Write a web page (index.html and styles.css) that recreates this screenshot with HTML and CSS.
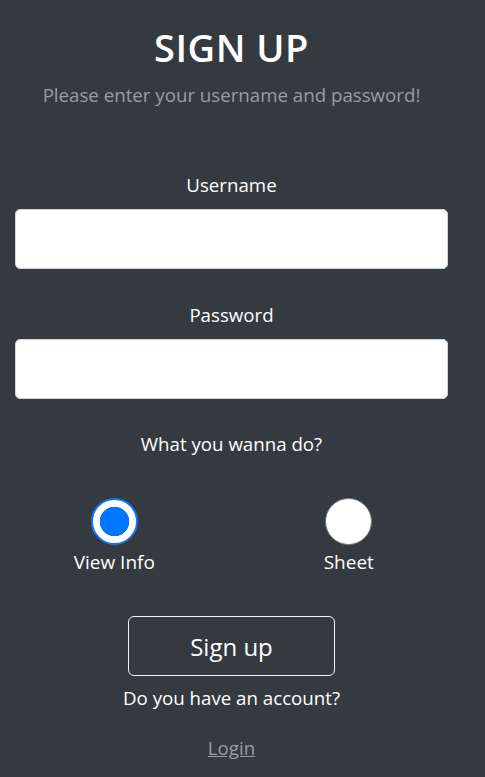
FILE: index.html
```html
<!DOCTYPE html>
<html>
<head>
<meta charset="utf-8">
<link rel="stylesheet" href="styles.css">
</head>
<body>
<main class="page">
  <h1 class="title">SIGN UP</h1>
  <p class="subtitle">Please enter your username and password!</p>
  <form class="form">
    <label class="label" for="u">Username</label>
    <input class="field" id="u" type="text">
    <label class="label pw" for="p">Password</label>
    <input class="field" id="p" type="password">
    <p class="question">What you wanna do?</p>
    <div class="choices">
      <label class="choice">
        <span class="radio checked"></span>
        <span class="choice-text">View Info</span>
      </label>
      <label class="choice">
        <span class="radio"></span>
        <span class="choice-text">Sheet</span>
      </label>
    </div>
    <button class="btn" type="button">Sign up</button>
    <p class="account">Do you have an account?</p>
    <a class="login" href="#">Login</a>
  </form>
</main>
</body>
</html>
```
FILE: styles.css
```css
html, body {
  margin: 0;
  padding: 0;
  background: #343a40;
  height: 100%;
}
body {
  font-family: "Open Sans", "Noto Sans", sans-serif;
  color: #fff;
}
.page {
  width: 433px;
  padding: 0 15px;
  display: flex;
  flex-direction: column;
  align-items: center;
}
.title {
  margin: 23px 0 0;
  font-size: 38px;
  font-weight: 600;
  line-height: 48px;
  letter-spacing: 0.5px;
}
.subtitle {
  margin: 10px 0 0;
  font-size: 18.7px;
  line-height: 27px;
  color: #9a9da1;
}
.form {
  width: 100%;
  display: flex;
  flex-direction: column;
  align-items: center;
  margin-top: 62.5px;
}
.label {
  font-size: 18.7px;
  line-height: 27px;
}
.label.pw {
  margin-top: 32px;
}
.field {
  box-sizing: border-box;
  width: 100%;
  height: 60px;
  margin-top: 11px;
  border: 1px solid #ced4da;
  border-radius: 5px;
  background: #fff;
}
.question {
  margin: 31px 0 0;
  font-size: 18.7px;
  line-height: 27px;
}
.choices {
  display: grid;
  grid-template-columns: 1fr 1fr;
  width: 463px;
  margin: 41px -15px 0;
}
.choice {
  display: flex;
  flex-direction: column;
  align-items: center;
}
.choice:first-child {
  margin-right: 3px;
}
.choice:last-child {
  margin-left: 3px;
}
.radio {
  box-sizing: border-box;
  width: 47px;
  height: 47px;
  border-radius: 50%;
  background: #fff;
  border: 1.5px solid #767676;
}
.radio.checked {
  border: 2px solid #0b77fb;
  background: radial-gradient(circle, #0075ff 0 14.5px, #fff 15px);
}
.choice-text {
  font-size: 19px;
  line-height: 27px;
  margin-top: 4px;
}
.btn {
  margin-top: 40.5px;
  width: 207px;
  height: 60px;
  background: transparent;
  color: #fff;
  border: 1px solid #f2f2f2;
  border-radius: 6px;
  font-family: inherit;
  font-size: 24px;
}
.account {
  margin: 7.5px 0 0;
  font-size: 18.7px;
  line-height: 27px;
}
.login {
  margin-top: 23px;
  font-size: 18.7px;
  line-height: 27px;
  color: #9a9da1;
}
```
